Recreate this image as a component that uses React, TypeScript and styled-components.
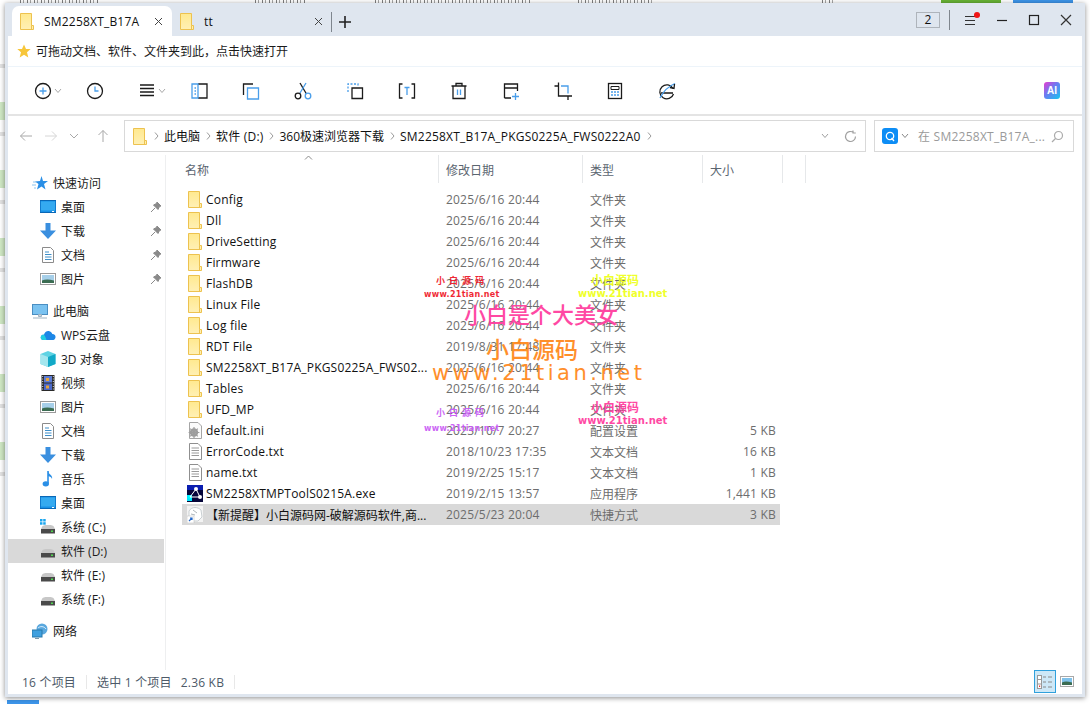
import React from "react";
import styled, { createGlobalStyle } from "styled-components";

const Global = createGlobalStyle`
  html, body { margin: 0; padding: 0; background: #fff; overflow: hidden; }
  * { box-sizing: border-box; }
  body { font-family: "Open Sans", "Noto Sans", "Noto Sans CJK SC", sans-serif; font-size: 12px; color: #111; }
`;

const Desktop = styled.div`
  position: relative; width: 1090px; height: 704px; padding: 3px 5px 7px; overflow: hidden; background: #fff;
`;
const BehindLeft = styled.div`
  position: absolute; left: 0; top: 60px; width: 5px; height: 440px;
  background: repeating-linear-gradient(180deg, #fff 0 4px, #e2e2e2 4px 8px, #fff 8px 42px, #cfe8c4 42px 60px, #fff 60px 68px);
`;
const BehindTop = styled.div`
  position: absolute; left: 0; top: 0; width: 100%; height: 3px; overflow: hidden;
`;
const BehindChip = styled.div<{ $x: number; $w: number; $c: string }>`
  position: absolute; top: 0; left: ${p => p.$x}px; width: ${p => p.$w}px; height: 3px; background: ${p => p.$c};
`;
const BehindText = styled.div<{ $x: number; $w: number }>`
  position: absolute; top: 0; left: ${p => p.$x}px; width: ${p => p.$w}px; height: 3px;
  background: repeating-linear-gradient(90deg, #808080 0 1px, transparent 1px 3px, #a8a8a8 3px 4px, transparent 4px 7px);
`;
const BehindTab = styled.div`
  position: absolute; left: 7px; bottom: 0; width: 32px; height: 4px; background: #3d95ea;
`;
const Win = styled.div`
  position: relative; width: 1080px; height: 694px; background: #dfe6ef; display: flex; flex-direction: column;
  box-shadow: 0 1px 5px rgba(0,0,0,.45); padding: 0 3px 3px;
`;
const TitleBar = styled.div`
  height: 33px; display: flex; align-items: flex-end; padding-left: 4px; margin-right: -3px;
`;
const Tab = styled.div<{ $active?: boolean }>`
  width: 160px; height: 30px; display: flex; align-items: center; padding: 0 8px 0 7px;
  background: ${p => (p.$active ? "#fff" : "transparent")}; border-radius: 7px 7px 0 0; flex: none;
`;
const TabLabel = styled.span`
  font-size: 12px; margin-left: 9px; flex: 1; overflow: hidden; white-space: nowrap; color: #111; letter-spacing: .2px;
`;
const TabClose = styled.svg`
  width: 9px; height: 9px; margin-right: 1px; flex: none;
`;
const Divider = styled.div<{ $h: number; $ml: number }>`
  width: 1px; height: ${p => p.$h}px; background: #7f868e; margin-left: ${p => p.$ml}px; flex: none;
`;
const TabAdd = styled.div`
  align-self: center; margin-top: 4px; display: flex; align-items: center;
`;
const TitleRight = styled.div`
  margin-left: auto; height: 33px; display: flex; align-items: center; padding-right: 12px;
`;
const CountBox = styled.div`
  width: 24px; height: 16px; border: 1px solid #aeb4bb; display: flex; align-items: center; justify-content: center;
  font-size: 12px; color: #111; line-height: 1;
`;
const WinIcon = styled.svg<{ $ml: number }>`
  width: 14px; height: 14px; margin-left: ${p => p.$ml}px; flex: none; overflow: visible;
`;
const Inner = styled.div`
  flex: 1; background: #fff; display: flex; flex-direction: column; min-height: 0;
`;
const QuickBar = styled.div`
  height: 31px; flex: none; display: flex; align-items: center; padding-left: 9px; gap: 5px;
  border-bottom: 1px solid #edf4fa; font-size: 12px; color: #1a1a1a;
`;
const ToolBar = styled.div`
  height: 49px; flex: none; display: flex; align-items: center; padding-left: 9px; border-bottom: 2px solid #e4e4e4; padding-right: 22px;
`;
const Tool = styled.div`
  position: relative; width: 52px; height: 24px; display: flex; align-items: center; justify-content: center; flex: none;
`;
const ToolCaret = styled.svg`
  position: absolute; left: 37px; top: 9px; width: 8px; height: 6px;
`;
const AiBadge = styled.div`
  margin-left: auto; width: 16px; height: 17px; border-radius: 3px; color: #fff; font: 700 10px "Liberation Sans", sans-serif;
  display: flex; align-items: center; justify-content: center; background: linear-gradient(135deg, #e83bd0 0%, #6a7cf2 45%, #14c7ee 100%);
`;
const AddressRow = styled.div`
  height: 39px; flex: none; display: flex; align-items: center; padding-top: 1px;
`;
const NavBtns = styled.div`
  width: 116px; display: flex; align-items: center; padding-left: 11px; flex: none;
`;
const NavIcon = styled.svg<{ $mr: number }>`
  width: 14px; height: 14px; margin-right: ${p => p.$mr}px; flex: none;
`;
const AddressBox = styled.div`
  width: 742px; height: 32px; border: 1px solid #d9d9d9; display: flex; align-items: center; padding-left: 7px; flex: none; font-size: 12px;
`;
const Crumb = styled.span<{ $latin?: boolean }>`
  color: #111; white-space: nowrap; letter-spacing: ${p => (p.$latin ? ".2px" : "0")};
`;
const CrumbSep = styled.svg`
  width: 5px; height: 8px; margin: 0 5px 0 6px; flex: none;
`;
const AddressEnd = styled.div`
  margin-left: auto; display: flex; align-items: center; gap: 15px; padding-right: 8px;
`;
const SearchBox = styled.div`
  width: 200px; height: 32px; margin-left: 8px; border: 1px solid #d9d9d9; display: flex; align-items: center; padding-left: 7px; flex: none;
`;
const SearchQ = styled.div`
  width: 16px; height: 16px; border-radius: 3px; background: #0d8df5; display: flex; align-items: center; justify-content: center; flex: none;
`;
const SearchCaret = styled.svg`
  width: 8px; height: 6px; margin-left: 3px; flex: none;
`;
const SearchText = styled.span`
  margin-left: 9px; color: #9a9a9a; font-size: 12px; white-space: nowrap; flex: 1; letter-spacing: .25px;
`;
const SearchGlass = styled.svg`
  width: 13px; height: 13px; margin-right: 9px; flex: none;
`;
const Body = styled.div`
  flex: 1; min-height: 0; display: flex;
`;
const Side = styled.nav`
  width: 158px; flex: none; border-right: 1px solid #eeeff0; padding-top: 16px; display: flex; flex-direction: column;
`;
const SideRow = styled.div<{ $level: number; $sel?: boolean; $gap?: number }>`
  height: 24px; flex: none; width: 156px; display: flex; align-items: center; position: relative;
  padding-left: ${p => (p.$level === 0 ? 24 : 32)}px; margin-top: ${p => p.$gap ?? 0}px;
  background: ${p => (p.$sel ? "#d9d9d9" : "transparent")}; color: #1c1c1c; font-size: 12px;
`;
const SideIconBox = styled.span`
  width: 16px; height: 16px; flex: none; display: flex; margin-right: 5px;
`;
const PinBox = styled.svg`
  position: absolute; left: 142px; top: 6px; width: 12px; height: 12px;
`;
const Content = styled.main`
  flex: 1; min-width: 0; padding-left: 16px; display: flex; flex-direction: column;
`;
const Head = styled.div`
  height: 28px; flex: none; position: relative; display: grid; grid-template-columns: 257px 144px 120px 80px 23px; margin-bottom: 6px; color: #5b6570; font-size: 12px;
`;
const HeadCell = styled.div<{ $pad: number }>`
  border-right: 1px solid #e6e8ea; display: flex; align-items: center; padding-left: ${p => p.$pad}px; padding-top: 1px;
`;
const SortCaret = styled.svg`
  position: absolute; left: 122px; top: 0; width: 9px; height: 5px;
`;
const Row = styled.div<{ $sel?: boolean }>`
  height: 21px; width: 598px; display: grid; grid-template-columns: 257px 144px 120px 77px; align-items: center;
  background: ${p => (p.$sel ? "#d9d9d9" : "transparent")}; font-size: 12px;
`;
const NameCell = styled.div<{ $latin: boolean }>`
  display: flex; align-items: center; padding-left: 5px; color: #111; white-space: nowrap; letter-spacing: ${p => (p.$latin ? ".2px" : "0")};
`;
const FileIconBox = styled.span`
  width: 16px; height: 17px; flex: none; display: flex; margin-right: 3px;
`;
const Cell = styled.div<{ $right?: boolean; $spaced?: boolean }>`
  color: #6d6d6d; white-space: nowrap; padding: ${p => (p.$right ? "0 4px 0 0" : "0 0 0 7px")}; text-align: ${p => (p.$right ? "right" : "left")};
  letter-spacing: ${p => (p.$spaced ? ".2px" : "0")};
`;
const StatusBar = styled.div`
  height: 24px; flex: none; display: flex; align-items: center; padding-left: 14px; color: #4d5a68; font-size: 12px; position: relative; letter-spacing: .2px;
`;
const StatusSize = styled.span`
  margin-left: 9px;
`;
const StatusSep = styled.div<{ $ml: number; $mr: number }>`
  width: 1px; height: 14px; background: #e8e8e8; margin: 0 ${p => p.$mr}px 0 ${p => p.$ml}px;
`;
const ViewBtns = styled.div`
  margin-left: auto; display: flex; align-items: center; padding-right: 8px; padding-bottom: 1px; gap: 4px;
`;
const ViewActive = styled.div`
  width: 22px; height: 23px; background: #cde8f7; border: 1px solid #2fa0dc; display: flex; align-items: center; justify-content: center;
`;
const Mark = styled.span<{ $x: number; $y: number; $size: number; $c: string; $ls?: number; $w?: number }>`
  position: absolute; left: ${p => p.$x}px; top: ${p => p.$y}px; font-size: ${p => p.$size}px; color: ${p => p.$c};
  letter-spacing: ${p => p.$ls ?? 0}px; font-weight: ${p => p.$w ?? 400}; line-height: 1; white-space: nowrap; opacity: .95;
  font-family: "DejaVu Sans", "Noto Sans CJK SC", sans-serif; pointer-events: none;
`;

const B = "#4a9eea";
const K = "#1b1b1b";

const Folder = () => (
  <svg width="16" height="17" viewBox="1 0 16 17">
    <defs>
      <linearGradient id="fg" x1="0" y1="0" x2="0" y2="1"><stop offset="0" stopColor="#ffe98f" /><stop offset="1" stopColor="#fff0b5" /></linearGradient>
    </defs>
    <path d="M2.5 .5H13.5V12.5H15.5V16.5H2.5Z M13.5 12.5V16.5" fill="url(#fg)" stroke="#edc24f" />
  </svg>
);
const DocIcon = () => (
  <svg width="16" height="17" viewBox="0 0 16 17">
    <path d="M2.5 .5H11L14.5 4V16.5H2.5Z" fill="#fff" stroke="#8f8f8f" />
    <path d="M4.5 5H12M4.5 7.5H12M4.5 10H12M4.5 12.5H12" stroke="#9a9a9a" />
  </svg>
);
const IniIcon = () => (
  <svg width="16" height="17" viewBox="0 0 16 17">
    <path d="M2.5 .5H11L14.5 4V16.5H2.5Z" fill="#fbfbfb" stroke="#a5a5a5" />
    <circle cx="7" cy="10.5" r="4.2" fill="#9d9d9d" /><circle cx="7" cy="10.5" r="1.8" fill="#e8e8e8" />
    <path d="M7 5V16M1.6 10.5H12.4M3.2 6.7L10.8 14.3M10.8 6.7L3.2 14.3" stroke="#9d9d9d" strokeWidth="1.2" />
  </svg>
);
const ExeIcon = () => (
  <svg width="16" height="17" viewBox="0 0 16 17">
    <rect width="16" height="17" y="0" fill="#06063a" />
    <rect width="16" height="5" y="0" fill="#0a1db0" />
    <rect x="0" y="10" width="5" height="6" fill="#00e5ff" />
    <circle cx="9" cy="4" r="2" fill="#fff" /><circle cx="3" cy="12" r="2" fill="#0ff" /><circle cx="13" cy="12" r="2" fill="#fff" />
    <path d="M9 4L3 12M9 4L13 12M3 12H13" stroke="#fff" />
  </svg>
);
const LinkIcon = () => (
  <svg width="16" height="17" viewBox="0 0 16 17">
    <rect x="0" y="0" width="16" height="16" fill="#f3f3f3" />
    <path d="M2 5C5 0 11 1 14 4L15 11L11 15H5L2 11Z" fill="#fff" stroke="#c9cfd2" />
    <path d="M6 4L10 7M4 8L8 9" stroke="#aeb6ba" />
    <rect x="0" y="10" width="7" height="7" fill="#fff" stroke="#bbb" strokeWidth=".5" />
    <path d="M2 15L5 12M3 12H5V14" stroke="#2468c9" strokeWidth="1.2" fill="none" />
  </svg>
);

const Monitor = () => (
  <svg width="16" height="16" viewBox="0 0 16 16">
    <rect x="0" y="1.5" width="16" height="12" fill="#1890e6" stroke="#0a67b5" />
    <rect x="1" y="2.5" width="14" height="9" fill="#35aaf0" />
    <path d="M12 12.5H14" stroke="#fff" />
  </svg>
);
const Down = () => (
  <svg width="16" height="16" viewBox="0 0 16 16"><path d="M5.5 0H10.5V7.5H16L8 16L0 7.5H5.5Z" fill="#3a8fdf" /></svg>
);
const Doc2 = () => (
  <svg width="16" height="16" viewBox="0 0 16 16">
    <path d="M2.5 .5H10.5L13.5 3.5V15.5H2.5Z" fill="#fff" stroke="#8b8b8b" />
    <path d="M5 5H9M5 7.5H11.5M5 10H11.5M5 12.5H11.5" stroke="#3f8fc9" />
  </svg>
);
const Pic = () => (
  <svg width="16" height="16" viewBox="0 0 16 16">
    <rect x=".5" y="2.5" width="15" height="11" fill="#fff" stroke="#9a9a9a" />
    <rect x="2" y="4" width="12" height="8" fill="#a6cfe9" />
    <path d="M2 9.5C5 8 9 8 14 9.5V12H2Z" fill="#3b6c52" />
  </svg>
);
const PC = () => (
  <svg width="16" height="16" viewBox="0 0 16 16">
    <rect x=".5" y="1.5" width="15" height="10" fill="#7ac2f0" stroke="#4a8ec2" />
    <path d="M6.5 11.5H9.5V13.5H6.5ZM1 15H15" stroke="#9fb3c2" fill="#c9d4dc" />
  </svg>
);
const Cloud = () => (
  <svg width="16" height="16" viewBox="0 0 16 16">
    <path d="M3.5 13C1 13 .2 10.8 1 9.2C1.6 8 3 7.6 4 7.8C4.6 5 7 3.6 9.4 4.2C11.2 4.6 12 6 12.3 7C14.5 7 15.8 8.6 15.5 10.4C15.2 12 14 13 12.4 13Z" fill="#1c86e6" />
    <path d="M3.5 13C1 13 .2 10.8 1 9.2C1.6 8 3 7.6 4 7.8C4.6 8.5 6 11 6.5 13Z" fill="#22cfe0" />
  </svg>
);
const Cube = () => (
  <svg width="16" height="16" viewBox="0 0 16 16">
    <path d="M8 0L15.5 3V13L8 16L.5 13V3Z" fill="#5ed3e3" />
    <path d="M8 6L15.5 3V13L8 16Z" fill="#12a9c7" /><path d="M.5 3L8 6V16L.5 13Z" fill="#a3e6ee" />
  </svg>
);
const Film = () => (
  <svg width="16" height="16" viewBox="0 0 16 16">
    <rect x="1.5" y="0" width="13" height="16" fill="#2a2a2a" />
    <rect x="4" y="1" width="8" height="6.5" fill="#5c7cd6" /><rect x="4" y="8.5" width="8" height="6.5" fill="#4a68c8" />
    <rect x="6" y="3" width="3" height="3" fill="#e6a33a" /><rect x="6" y="10.5" width="3" height="3" fill="#e6a33a" />
    <path d="M2.7 1V15M13.3 1V15" stroke="#ddd" strokeDasharray="1 1.5" />
  </svg>
);
const Note = () => (
  <svg width="16" height="16" viewBox="0 0 16 16">
    <path d="M8 0V12" stroke="#2a8fe6" strokeWidth="1.6" /><ellipse cx="5.8" cy="12.8" rx="3.2" ry="2.6" fill="#2a8fe6" />
    <path d="M8 0C9 4 13 4 12 8C11.5 6 10 5.5 8 5Z" fill="#2a8fe6" />
  </svg>
);
const Drive = ({ win }: { win?: boolean }) => (
  <svg width="16" height="16" viewBox="0 0 16 16">
    <path d="M2 8C2.5 6.5 4 6 8 6C12 6 13.5 6.5 14 8L15 10H1Z" fill="#c7c7c7" />
    <rect x="1" y="10" width="14" height="4.5" fill="#4a4a4a" /><rect x="11" y="11.5" width="2" height="1.5" fill="#4fd84f" />
    {win && <g fill="#1aa5ee"><rect x="0" y="0" width="2.5" height="2.5" /><rect x="3.2" y="0" width="2.5" height="2.5" /><rect x="0" y="3.2" width="2.5" height="2.5" /><rect x="3.2" y="3.2" width="2.5" height="2.5" /></g>}
  </svg>
);
const Net = () => (
  <svg width="16" height="16" viewBox="0 0 16 16">
    <circle cx="10" cy="6" r="5.5" fill="#5aa8de" /><path d="M6 5C8 3 12 3 14 6" stroke="#d6ecfa" fill="none" />
    <rect x="0" y="7" width="10" height="7" fill="#3fa0df" stroke="#2878aa" /><path d="M3 15.5H7" stroke="#7d97a8" />
  </svg>
);
const QStar = () => (
  <svg width="16" height="16" viewBox="0 0 16 16">
    <path d="M9.5 1L11 6H16L12 9L13.5 14.5L9.5 11.5L5 14.5L6.5 9L3 6.5L8 6Z" fill="#2a8fe6" />
    <path d="M1 7H4M0 10H4M2 13H4" stroke="#8cc4ef" />
  </svg>
);

const sideItems: { label: string; icon: React.ReactNode; level: number; pin?: boolean; sel?: boolean; gap?: number }[] = [
  { label: "快速访问", icon: <QStar />, level: 0 },
  { label: "桌面", icon: <Monitor />, level: 1, pin: true },
  { label: "下载", icon: <Down />, level: 1, pin: true },
  { label: "文档", icon: <Doc2 />, level: 1, pin: true },
  { label: "图片", icon: <Pic />, level: 1, pin: true },
  { label: "此电脑", icon: <PC />, level: 0, gap: 8 },
  { label: "WPS云盘", icon: <Cloud />, level: 1 },
  { label: "3D 对象", icon: <Cube />, level: 1 },
  { label: "视频", icon: <Film />, level: 1 },
  { label: "图片", icon: <Pic />, level: 1 },
  { label: "文档", icon: <Doc2 />, level: 1 },
  { label: "下载", icon: <Down />, level: 1 },
  { label: "音乐", icon: <Note />, level: 1 },
  { label: "桌面", icon: <Monitor />, level: 1 },
  { label: "系统 (C:)", icon: <Drive win />, level: 1 },
  { label: "软件 (D:)", icon: <Drive />, level: 1, sel: true },
  { label: "软件 (E:)", icon: <Drive />, level: 1 },
  { label: "系统 (F:)", icon: <Drive />, level: 1 },
  { label: "网络", icon: <Net />, level: 0, gap: 8 },
];

const F = "文件夹";
const files: { name: string; date: string; type: string; size?: string; icon: React.ReactNode; sel?: boolean }[] = [
  { name: "Config", date: "2025/6/16 20:44", type: F, icon: <Folder /> },
  { name: "Dll", date: "2025/6/16 20:44", type: F, icon: <Folder /> },
  { name: "DriveSetting", date: "2025/6/16 20:44", type: F, icon: <Folder /> },
  { name: "Firmware", date: "2025/6/16 20:44", type: F, icon: <Folder /> },
  { name: "FlashDB", date: "2025/6/16 20:44", type: F, icon: <Folder /> },
  { name: "Linux File", date: "2025/6/16 20:44", type: F, icon: <Folder /> },
  { name: "Log file", date: "2025/6/16 20:44", type: F, icon: <Folder /> },
  { name: "RDT File", date: "2019/8/31 17:48", type: F, icon: <Folder /> },
  { name: "SM2258XT_B17A_PKGS0225A_FWS02...", date: "2025/6/16 20:44", type: F, icon: <Folder /> },
  { name: "Tables", date: "2025/6/16 20:44", type: F, icon: <Folder /> },
  { name: "UFD_MP", date: "2025/6/16 20:44", type: F, icon: <Folder /> },
  { name: "default.ini", date: "2023/10/7 20:27", type: "配置设置", size: "5 KB", icon: <IniIcon /> },
  { name: "ErrorCode.txt", date: "2018/10/23 17:35", type: "文本文档", size: "16 KB", icon: <DocIcon /> },
  { name: "name.txt", date: "2019/2/25 15:17", type: "文本文档", size: "1 KB", icon: <DocIcon /> },
  { name: "SM2258XTMPToolS0215A.exe", date: "2019/2/15 13:57", type: "应用程序", size: "1,441 KB", icon: <ExeIcon /> },
  { name: "【新提醒】小白源码网-破解源码软件,商...", date: "2025/5/23 20:04", type: "快捷方式", size: "3 KB", icon: <LinkIcon />, sel: true },
];

const S = { fill: "none", stroke: K, strokeWidth: 1.3 };
const SB = { fill: "none", stroke: B, strokeWidth: 1.3 };
const tools: React.ReactNode[] = [
  <><circle cx="11" cy="11" r="7.5" {...S} /><path d="M7.5 11H14.5M11 7.5V14.5" {...SB} /></>,
  <><circle cx="11" cy="11" r="7.5" {...S} /><path d="M11 6.5V11H14.5" {...SB} /></>,
  <path d="M4 5H18M4 8.5H18M4 12H18M4 15.5H18" {...S} />,
  <><path d="M10 4H19V18H10" {...S} /><path d="M4 4H10V18H4Z M6.5 8H8M6.5 11H8M6.5 14H8" {...SB} /></>,
  <><path d="M3.5 15V4H13" {...S} /><path d="M7.5 8H18.5V19H7.5Z" {...SB} /></>,
  <><path d="M8 3L14.5 14" {...S} /><path d="M14 3L8 13" {...SB} /><circle cx="6" cy="16" r="2.8" {...S} /><circle cx="16" cy="16" r="2.8" {...SB} /></>,
  <><path d="M4 12V4H14V7" {...SB} strokeDasharray="2 1.5" /><path d="M8 8H18.5V18.5H8Z" {...S} /></>,
  <><path d="M6.5 4H3.5V18H6.5M15.5 4H18.5V18H15.5" {...S} /><path d="M8.5 7.5H13.5M11 7.5V15" {...SB} /></>,
  <><path d="M3.5 6H18.5M8 6V3.5H14V6M5 6V18.5H17V6" {...S} /><path d="M9.5 9.5V15M12.5 9.5V15" {...SB} /></>,
  <><path d="M4.5 18V4H17.5V11M4.5 8H17.5M4.5 18H11" {...S} /><path d="M12 16.5H19M15.5 13V20" {...SB} /></>,
  <><path d="M6.5 2.5V16H20M2.5 6H6.5M16 16V20" {...S} /><path d="M9 6H16V13.5" {...SB} /></>,
  <><rect x="4.5" y="3.5" width="13" height="15" {...S} /><path d="M7 6.5H15V9.5H7Z" {...S} strokeWidth="1" /><path d="M7 12H15M7 15H15" {...SB} strokeDasharray="2 1" /></>,
  <><path d="M17 8.5A7 7 0 1 0 17.5 14M5 13H17" {...S} /><path d="M4 18C7 12 13 6 19 3.5" {...SB} /><path d="M14 7.5L18 8.5L18.5 4" {...S} /></>,
];

const Chevron = ({ c = "#9a9a9a" }: { c?: string }) => (
  <CrumbSep viewBox="0 0 5 8"><path d="M1 .5L4 4L1 7.5" fill="none" stroke={c} /></CrumbSep>
);
const Caret = () => (
  <ToolCaret viewBox="0 0 8 6"><path d="M1 1L4 4.5L7 1" fill="none" stroke="#a8a8a8" /></ToolCaret>
);

export default function App() {
  return (
    <Desktop>
      <Global />
      <BehindLeft />
      <BehindTop>
        <BehindText $x={20} $w={78} />
        <BehindText $x={255} $w={50} />
        <BehindText $x={375} $w={155} />
        <BehindText $x={578} $w={75} />
        <BehindText $x={822} $w={14} />
        <BehindChip $x={941} $w={60} $c="#68b336" />
        <BehindChip $x={1013} $w={60} $c="#3d95ea" />
      </BehindTop>
      <BehindTab />
      <Win>
        <TitleBar>
          <Tab $active>
            <Folder />
            <TabLabel>SM2258XT_B17A</TabLabel>
            <TabClose viewBox="0 0 9 9"><path d="M1 1L8 8M8 1L1 8" stroke="#444" /></TabClose>
          </Tab>
          <Tab>
            <Folder />
            <TabLabel>tt</TabLabel>
            <TabClose viewBox="0 0 9 9"><path d="M1 1L8 8M8 1L1 8" stroke="#444" /></TabClose>
          </Tab>
          <TabAdd>
            <Divider $h={20} $ml={-1} />
            <WinIcon $ml={6} viewBox="0 0 14 14"><path d="M7 1V13M1 7H13" stroke="#222" strokeWidth="1.6" /></WinIcon>
          </TabAdd>
          <TitleRight>
            <CountBox>2</CountBox>
            <Divider $h={20} $ml={9} />
            <WinIcon $ml={15} viewBox="0 0 14 14"><path d="M0 3.5H10M0 7.5H10M0 11.5H10" stroke="#333" /><circle cx="12" cy="2" r="3" fill="#f01515" /></WinIcon>
            <WinIcon $ml={16} viewBox="0 0 14 14"><path d="M2 7.5H12" stroke="#222" strokeWidth="1.2" /></WinIcon>
            <WinIcon $ml={18} viewBox="0 0 14 14"><rect x="2.5" y="2.5" width="9" height="9" fill="none" stroke="#222" strokeWidth="1.2" /></WinIcon>
            <WinIcon $ml={18} viewBox="0 0 14 14"><path d="M2 2L12 12M12 2L2 12" stroke="#333" strokeWidth="1.2" /></WinIcon>
          </TitleRight>
        </TitleBar>
        <Inner>
          <QuickBar>
            <svg width="14" height="14" viewBox="0 0 14 14"><path d="M7 .5L9 5H13.7L10 8.2L11.3 13.5L7 10.7L2.7 13.5L4 8.2L.3 5H5Z" fill="#f7c63a" /></svg>
            可拖动文档、软件、文件夹到此，点击快速打开
          </QuickBar>
          <ToolBar>
            {tools.map((t, i) => (
              <Tool key={i}>
                <svg width="22" height="22" viewBox="0 0 22 22">{t}</svg>
                {(i === 0 || i === 2) && <Caret />}
              </Tool>
            ))}
            <AiBadge>AI</AiBadge>
          </ToolBar>
          <AddressRow>
            <NavBtns>
              <NavIcon $mr={11} viewBox="0 0 14 14"><path d="M13 7H1.5M6 2.5L1.5 7L6 11.5" fill="none" stroke="#a8a8a8" /></NavIcon>
              <NavIcon $mr={9} viewBox="0 0 14 14"><path d="M1 7H12.5M8 2.5L12.5 7L8 11.5" fill="none" stroke="#d6d6d6" /></NavIcon>
              <NavIcon $mr={15} viewBox="0 0 14 14"><path d="M3 5L7 9L11 5" fill="none" stroke="#a8a8a8" /></NavIcon>
              <NavIcon $mr={0} viewBox="0 0 14 14"><path d="M7 13V1.5M2.5 6L7 1.5L11.5 6" fill="none" stroke="#a8a8a8" /></NavIcon>
            </NavBtns>
            <AddressBox>
              <Folder />
              <Chevron />
              <Crumb>此电脑</Crumb><Chevron />
              <Crumb $latin>软件 (D:)</Crumb><Chevron />
              <Crumb>360极速浏览器下载</Crumb><Chevron />
              <Crumb $latin>SM2258XT_B17A_PKGS0225A_FWS0222A0</Crumb><Chevron />
              <AddressEnd>
                <svg width="8" height="6" viewBox="0 0 8 6"><path d="M1 1L4 4.5L7 1" fill="none" stroke="#a0a0a0" /></svg>
                <svg width="13" height="13" viewBox="0 0 13 13"><path d="M11.5 6.5A5 5 0 1 1 9.5 2.5M9 .5V3H11.8" fill="none" stroke="#a0a0a0" strokeWidth="1.2" /></svg>
              </AddressEnd>
            </AddressBox>
            <SearchBox>
              <SearchQ><svg width="10" height="11" viewBox="0 0 10 11"><circle cx="5" cy="5" r="3.7" fill="none" stroke="#fff" strokeWidth="1.3" /><path d="M6.5 7L9 10" stroke="#fff" strokeWidth="1.3" /></svg></SearchQ>
              <SearchCaret viewBox="0 0 8 6"><path d="M1 1L4 4.5L7 1" fill="none" stroke="#888" /></SearchCaret>
              <SearchText>在 SM2258XT_B17A_...</SearchText>
              <SearchGlass viewBox="0 0 13 13"><circle cx="7.5" cy="5.5" r="4" fill="none" stroke="#aaa" strokeWidth="1.2" /><path d="M4.5 8.5L1 12" stroke="#aaa" strokeWidth="1.2" /></SearchGlass>
            </SearchBox>
          </AddressRow>
          <Body>
            <Side>
              {sideItems.map((s, i) => (
                <SideRow key={i} $level={s.level} $sel={s.sel} $gap={s.gap}>
                  <SideIconBox>{s.icon}</SideIconBox>
                  {s.label}
                  {s.pin && (
                    <PinBox viewBox="0 0 12 12"><path d="M7 1L11 5L9.5 5.5L8 8.5L3.5 4L6.5 2.5ZM5 7L1 11" fill="#8a8a8a" stroke="#8a8a8a" /></PinBox>
                  )}
                </SideRow>
              ))}
            </Side>
            <Content>
              <Head>
                <HeadCell $pad={3}>名称</HeadCell>
                <HeadCell $pad={7}>修改日期</HeadCell>
                <HeadCell $pad={7}>类型</HeadCell>
                <HeadCell $pad={7}>大小</HeadCell>
                <HeadCell $pad={0} />
                <SortCaret viewBox="0 0 9 5"><path d="M1 4.5L4.5 1L8 4.5" fill="none" stroke="#8a8a8a" /></SortCaret>
              </Head>
              {files.map((f, i) => (
                <Row key={i} $sel={f.sel}>
                  <NameCell $latin={!f.sel}><FileIconBox>{f.icon}</FileIconBox>{f.name}</NameCell>
                  <Cell $spaced>{f.date}</Cell>
                  <Cell>{f.type}</Cell>
                  <Cell $right $spaced>{f.size}</Cell>
                </Row>
              ))}
            </Content>
          </Body>
          <StatusBar>
            16 个项目
            <StatusSep $ml={10} $mr={10} />
            选中 1 个项目
            <StatusSize>2.36 KB</StatusSize>
            <StatusSep $ml={10} $mr={0} />
            <ViewBtns>
              <ViewActive>
                <svg width="16" height="14" viewBox="0 0 16 14">
                  <rect x=".5" y=".5" width="4" height="13" fill="#fff" stroke="#999" />
                  <path d="M.5 4.5H4.5M.5 9H4.5" stroke="#999" /><rect x="2" y="10.5" width="1.2" height="1.5" fill="#e33" />
                  <path d="M6 2H9M11 2H15M6 7H9M11 7H15M6 12H9M11 12H15" stroke="#8a8a8a" />
                </svg>
              </ViewActive>
              <svg width="14" height="12" viewBox="0 0 14 12">
                <rect x=".5" y=".5" width="13" height="10" fill="#fff" stroke="#a8a8a8" />
                <rect x="2" y="2" width="10" height="7" fill="#7fc1ea" /><path d="M2 6.5C5 5 8 5.5 12 6.5V9H2Z" fill="#3b6c52" />
              </svg>
            </ViewBtns>
          </StatusBar>
        </Inner>
      </Win>
      <Mark $x={436} $y={277} $size={9} $c="#f01c2c" $ls={4} $w={700}>小白源码</Mark>
      <Mark $x={424} $y={291} $size={8} $c="#f01c2c" $ls={.3} $w={700}>www.21tian.net</Mark>
      <Mark $x={591} $y={275} $size={12} $c="#efff20" $w={700}>小白源码</Mark>
      <Mark $x={578} $y={289} $size={10} $c="#efff20" $w={700}>www.21tian.net</Mark>
      <Mark $x={464} $y={305} $size={22} $c="#ff3f9f" $w={500}>小白是个大美女</Mark>
      <Mark $x={486} $y={339} $size={23} $c="#ff8a1e" $w={500}>小白源码</Mark>
      <Mark $x={432} $y={363} $size={21} $c="#ff8a1e" $ls={3.5}>www.21tian.net</Mark>
      <Mark $x={436} $y={409} $size={9} $c="#c95cf5" $ls={4} $w={700}>小白源码</Mark>
      <Mark $x={424} $y={425} $size={8} $c="#c95cf5" $ls={.3} $w={700}>www.21tian.net</Mark>
      <Mark $x={591} $y={402} $size={12} $c="#ff3f9f" $w={700}>小白源码</Mark>
      <Mark $x={578} $y={416} $size={10} $c="#ff3f9f" $w={700}>www.21tian.net</Mark>
    </Desktop>
  );
}
